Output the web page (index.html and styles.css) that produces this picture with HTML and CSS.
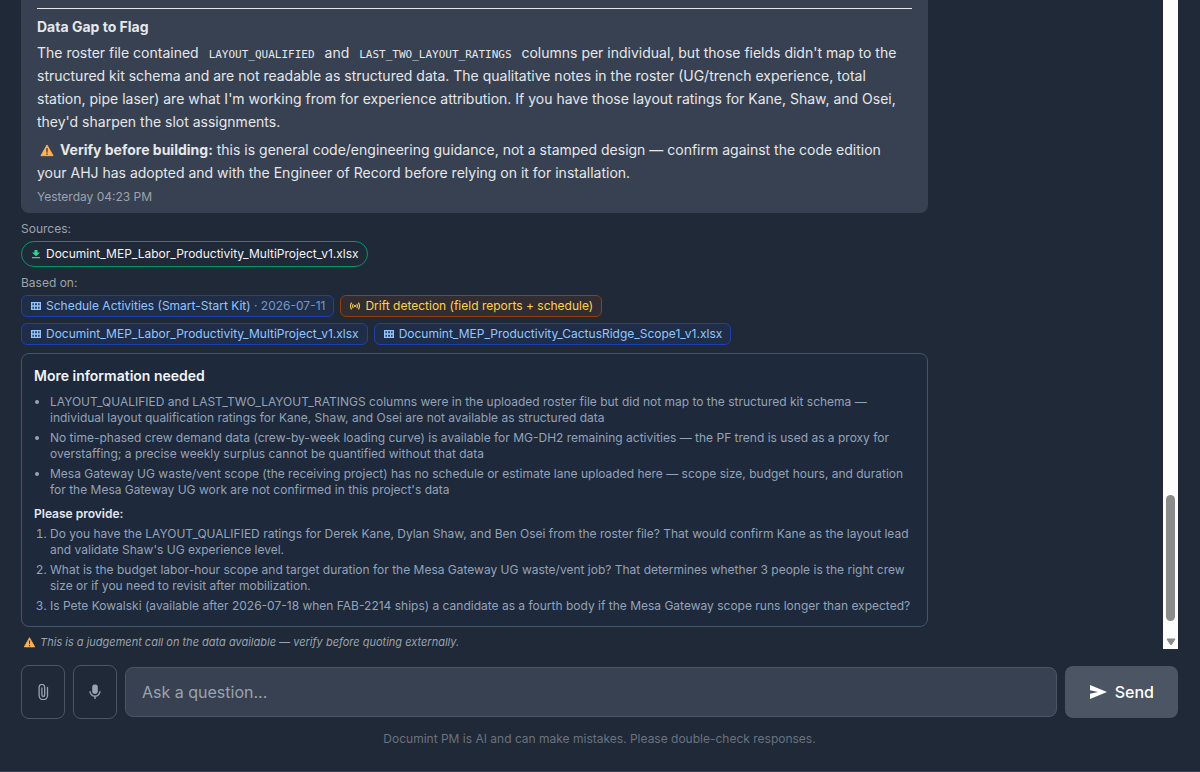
FILE: index.html
```html
<!DOCTYPE html>
<html lang="en">

<head>
    <meta charset="UTF-8">
    <meta name="viewport" content="width=device-width, initial-scale=1.0">
    <title>Documint PM</title>
    <link rel="stylesheet" href="styles.css">
</head>

<body>
    <!-- Shared icons -->
    <svg class="icon-defs" aria-hidden="true">
        <symbol id="icon-table" viewBox="0 0 10 10">
            <path fill="none" stroke="currentColor" stroke-width="1.3" d="M.8 1.6h8.4v6.8H.8zM.8 5h8.4M3.5 1.6v6.8M6.5 1.6v6.8" />
            <path fill="none" stroke="currentColor" stroke-width="1" d="M.5 1v8M9.5 1v8" />
        </symbol>
        <symbol id="icon-warning" viewBox="0 0 16 16">
            <path fill="#ffb255" stroke="#ffb255" stroke-width="1" stroke-linejoin="round" d="M8 2.2 15 14.5H1z" />
            <path fill="#3b3a42" d="M7.1 6h1.8l-.3 5H7.4zM7.2 12h1.6v1.5H7.2z" />
        </symbol>
    </svg>

    <main class="chat">
        <div class="scroll-area">
            <div class="messages">
                <article class="bubble">
                    <hr>
                    <h3>Data Gap to Flag</h3>
                    <p>The roster file contained <code>LAYOUT_QUALIFIED</code> and <code>LAST_TWO_LAYOUT_RATINGS</code> columns per individual, but those fields didn't map to the structured kit schema and are not readable as structured data. The qualitative notes in the roster (UG/trench experience, total station, pipe laser) are what I'm working from for experience attribution. If you have those layout ratings for Kane, Shaw, and Osei, they'd sharpen the slot assignments.</p>
                    <p><svg class="warning" aria-hidden="true"><use href="#icon-warning" /></svg> <strong>Verify before building:</strong> this is general code/engineering guidance, not a stamped design — confirm against the code edition your AHJ has adopted and with the Engineer of Record before relying on it for installation.</p>
                    <time>Yesterday 04:23 PM</time>
                </article>

                <!-- Downloadable sources -->
                <div class="label">Sources:</div>
                <div class="tags">
                    <a href="#" class="source">
                        <svg viewBox="0 0 10 10" aria-hidden="true"><path fill="currentColor" d="M3.5 1h3v2.6H9L5 7.2 1 3.6h2.5zM1 8h8v1.3H1z" /></svg>
                        Documint_MEP_Labor_Productivity_MultiProject_v1.xlsx
                    </a>
                </div>

                <!-- Data the answer is based on -->
                <div class="label">Based on:</div>
                <div class="tags">
                    <span class="tag"><svg aria-hidden="true"><use href="#icon-table" /></svg><span>Schedule Activities (Smart-Start Kit) <span class="date">· 2026-07-11</span></span></span>
                    <span class="tag drift">
                        <svg viewBox="0 0 10 10" aria-hidden="true">
                            <path fill="none" stroke="currentColor" stroke-width="1.1" d="M1.6 1.6C.3 3.6.3 6.4 1.6 8.4M3.3 3c-.8 1.2-.8 2.8 0 4M8.4 1.6c1.3 2 1.3 4.8 0 6.8M6.7 3c.8 1.2.8 2.8 0 4" />
                            <circle cx="5" cy="5" r="1.1" fill="currentColor" />
                        </svg>
                        Drift detection (field reports + schedule)
                    </span>
                    <span class="tag"><svg aria-hidden="true"><use href="#icon-table" /></svg>Documint_MEP_Labor_Productivity_MultiProject_v1.xlsx</span>
                    <span class="tag"><svg aria-hidden="true"><use href="#icon-table" /></svg>Documint_MEP_Productivity_CactusRidge_Scope1_v1.xlsx</span>
                </div>

                <section class="info">
                    <h4>More information needed</h4>
                    <ul>
                        <li>LAYOUT_QUALIFIED and LAST_TWO_LAYOUT_RATINGS columns were in the uploaded roster file but did not map to the structured kit schema — individual layout qualification ratings for Kane, Shaw, and Osei are not available as structured data</li>
                        <li>No time-phased crew demand data (crew-by-week loading curve) is available for MG-DH2 remaining activities — the PF trend is used as a proxy for overstaffing; a precise weekly surplus cannot be quantified without that data</li>
                        <li>Mesa Gateway UG waste/vent scope (the receiving project) has no schedule or estimate lane uploaded here — scope size, budget hours, and duration for the Mesa Gateway UG work are not confirmed in this project's data</li>
                    </ul>
                    <h5>Please provide:</h5>
                    <ol>
                        <li>Do you have the LAYOUT_QUALIFIED ratings for Derek Kane, Dylan Shaw, and Ben Osei from the roster file? That would confirm Kane as the layout lead and validate Shaw's UG experience level.</li>
                        <li>What is the budget labor-hour scope and target duration for the Mesa Gateway UG waste/vent job? That determines whether 3 people is the right crew size or if you need to revisit after mobilization.</li>
                        <li>Is Pete Kowalski (available after 2026-07-18 when FAB-2214 ships) a candidate as a fourth body if the Mesa Gateway scope runs longer than expected?</li>
                    </ol>
                </section>

                <p class="caution"><svg class="warning" aria-hidden="true"><use href="#icon-warning" /></svg> This is a judgement call on the data available — verify before quoting externally.</p>
            </div>

            <div class="scrollbar" aria-hidden="true">
                <div class="thumb"></div>
                <svg viewBox="0 0 10 8"><path fill="#8b8b8b" stroke="#8b8b8b" stroke-linejoin="round" d="M1 1h8L5.5 6.5h-1z" /></svg>
            </div>
        </div>

        <form class="composer">
            <button type="button" class="tool" aria-label="Attach a file">
                <svg viewBox="0 0 16 16" aria-hidden="true"><path fill="none" stroke="currentColor" stroke-width="1.3" stroke-linecap="round" d="M12.5 3.5v8a4.2 4.2 0 0 1-8.4 0V3.2a2.8 2.8 0 0 1 5.6 0v7.9a1.4 1.4 0 0 1-2.8 0V4" /></svg>
            </button>
            <button type="button" class="tool" aria-label="Record a question">
                <svg viewBox="0 0 16 16" aria-hidden="true">
                    <rect x="5.2" y=".5" width="5.6" height="9.5" rx="2.4" fill="currentColor" />
                    <path fill="none" stroke="currentColor" stroke-width="1.4" d="M3 7.2a5 5 0 0 0 10 0M8 12.2V15" />
                </svg>
            </button>
            <input type="text" placeholder="Ask a question..." aria-label="Ask a question">
            <button type="submit" class="send">
                <svg viewBox="0 0 18 16" aria-hidden="true"><path fill="currentColor" d="M1 1 18 8 1 15V9.7L9 8 1 6.3z" /></svg>
                Send
            </button>
        </form>

        <p class="disclaimer">Documint PM is AI and can make mistakes. Please double-check responses.</p>
    </main>
</body>

</html>
```
FILE: styles.css
```css
/* General body and page styling */
* {
    box-sizing: border-box;
}

body {
    margin: 0;
    background-color: #1f2937;
    color: #e5e7eb;
    font-family: Inter, "Liberation Sans", sans-serif;
    font-size: 14px;
}

h3,
h4,
h5,
p,
ul,
ol {
    margin: 0;
}

.icon-defs {
    display: none;
}

.chat {
    padding: 0 22px 24px 21px;
    border-bottom: 1px solid #374151;
}

/* Message list and its scrollbar */
.scroll-area {
    display: flex;
    justify-content: space-between;
}

.messages {
    width: 80%;
    max-width: 907px;
}

.scrollbar {
    display: flex;
    flex-direction: column;
    align-items: center;
    justify-content: flex-end;
    gap: 17px;
    width: 15px;
    padding-bottom: 3px;
    background-color: #fcfcfc;
}

.scrollbar .thumb {
    width: 9px;
    height: 126px;
    border-radius: 5px;
    background-color: #8b8b8b;
}

.scrollbar svg {
    width: 10px;
    height: 8px;
}

/* Assistant answer */
.bubble {
    padding: 8px 16px;
    border-radius: 0 0 8px 8px;
    background-color: #374151;
}

.bubble hr {
    margin: 0 0 8px;
    border: 0;
    border-top: 1px solid #e5e7eb;
}

.bubble h3 {
    margin-bottom: 4px;
    font-size: 14px;
    font-weight: 700;
    line-height: 20px;
}

.bubble p {
    margin-bottom: 5px;
    line-height: 23px;
}

.bubble code {
    padding: 2px 6px;
    font-family: "DejaVu Sans Mono", monospace;
    font-size: 11px;
    line-height: 16px;
}

.bubble time {
    display: block;
    color: #9ca3af;
    font-size: 12px;
    line-height: 16px;
}

.warning {
    width: 16px;
    height: 14px;
    margin: 0 1px 0 2px;
    vertical-align: -2px;
}

/* Sources and data tags */
.label {
    margin: 8px 0 4px;
    color: #9ca3af;
    font-size: 12px;
    line-height: 16px;
}

.tags {
    display: flex;
    flex-wrap: wrap;
    gap: 6px;
}

.source,
.tag {
    display: inline-flex;
    align-items: center;
    gap: 5px;
    padding: 2px 8px 2px 9px;
    border: 1px solid #1e40af;
    border-radius: 6px;
    background-color: #202d48;
    color: #93c5fd;
    font-size: 12px;
    line-height: 16px;
}

.source svg,
.tag svg {
    width: 10px;
    height: 10px;
}

.source {
    padding: 4px 8px 4px 9px;
    border-color: #059669;
    border-radius: 13px;
    background-color: transparent;
    color: #f3f4f6;
    text-decoration: none;
}

.source svg {
    color: #34d399;
}

.tag .date {
    opacity: 0.7;
}

.tag.drift {
    border-color: #92400e;
    background-color: #332d31;
    color: #fcd34d;
}

/* Follow-up information card */
.info {
    margin-top: 8px;
    padding: 12px;
    border: 1px solid #475569;
    border-radius: 8px;
    background-color: #1e293b;
    color: #94a3b8;
    font-size: 12px;
    line-height: 16px;
}

.info h4 {
    margin-bottom: 8px;
    color: #f1f5f9;
    font-size: 14px;
    font-weight: 600;
    line-height: 20px;
}

.info h5 {
    margin: 8px 0 4px;
    color: #e2e8f0;
    font-size: 12px;
    font-weight: 600;
}

.info ul,
.info ol {
    padding-left: 16px;
}

.info li + li {
    margin-top: 4px;
}

.caution {
    margin-top: 8px;
    color: #9ca3af;
    font-size: 11px;
    font-style: italic;
    line-height: 14px;
}

.caution .warning {
    width: 13px;
    height: 12px;
}

/* Question box */
.composer {
    display: flex;
    align-items: center;
    gap: 8px;
    margin-top: 16px;
}

.composer button,
.composer input {
    border: 1px solid #4b5563;
    border-radius: 8px;
    font-family: inherit;
    font-size: 16px;
}

.tool {
    display: flex;
    align-items: center;
    justify-content: center;
    width: 44px;
    height: 54px;
    padding: 0;
    background-color: transparent;
    color: #9ca3af;
}

.tool svg {
    width: 16px;
    height: 16px;
}

.composer input {
    flex: 1;
    min-width: 0;
    height: 50px;
    padding: 0 16px;
    background-color: #374151;
    color: #f3f4f6;
}

.composer input::placeholder {
    color: #9ca3af;
}

.composer .send {
    display: flex;
    align-items: center;
    gap: 8px;
    height: 52px;
    padding: 0 24px;
    border: 0;
    background-color: #4b5563;
    color: #ffffff;
    font-weight: 500;
}

.send svg {
    width: 18px;
    height: 16px;
}

.disclaimer {
    margin-top: 12px;
    color: #6b7280;
    font-size: 12px;
    line-height: 16px;
    text-align: center;
}
```
